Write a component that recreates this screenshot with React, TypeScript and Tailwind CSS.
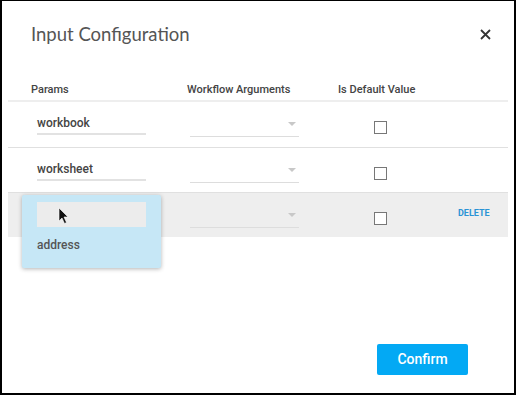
import React from 'react';

const rows = [
    { name: 'workbook', active: false, h: 'h-[46px]' },
    { name: 'worksheet', active: false, h: 'h-[45px]' },
    { name: '', active: true, h: 'h-[44px]' },
];

const Caret = () => (
    <svg width="8" height="5" viewBox="0 0 8 5" className="absolute right-[3px] top-[-14px]">
        <path d="M0 0 L8 0 L4 4 Z" fill="#c8c8c8" />
    </svg>
);

const Cursor = () => (
    <svg width="11" height="18" viewBox="0 0 11 18" className="absolute left-[21px] top-[5px]">
        <path d="M1 1 L1 14 L4 11 L6.5 16.5 L8.5 15.5 L6 10 L10 10 Z" fill="#111" stroke="#fff" strokeWidth="0.6" />
    </svg>
);

export default function App() {
    return (
        <div
            className="w-[516px] h-[395px] bg-white border-l-2 border-r-2 border-b-2 border-t border-black flex flex-col"
            style={{ fontFamily: 'Roboto, "Liberation Sans", sans-serif' }}
        >
            {/* Header */}
            <div className="flex items-center justify-between pl-[29px] pr-[23px] pt-[20px]">
                <h1
                    className="text-[18.5px] leading-[26px] text-[#555]"
                    style={{ fontFamily: 'Lato, "Open Sans", sans-serif' }}
                >
                    Input Configuration
                </h1>
                <svg width="11" height="11" viewBox="0 0 11 11" className="mt-[1px]">
                    <path d="M1 1 L10 10 M10 1 L1 10" stroke="#333" strokeWidth="1.8" />
                </svg>
            </div>

            {/* Table */}
            <div className="mx-[6px] mt-[35px] relative">
                <div className="grid grid-cols-[179px_151px_120px_1fr] h-[20px] border-b-2 border-[#eee] text-[11px] font-medium text-[#444] items-start">
                    <div className="pl-[23px]">Params</div>
                    <div>Workflow Arguments</div>
                    <div>Is Default Value</div>
                    <div />
                </div>

                {rows.map((row, idx) => (
                    <div
                        key={idx}
                        className={`grid grid-cols-[179px_151px_120px_1fr] ${row.h} items-start ${idx < 2 ? 'border-b border-[#e0e0e0]' : ''} ${row.active ? 'bg-[#eee]' : ''}`}
                    >
                        <div className="pl-[29px] pt-[9px]">
                            <div className="w-[109px] h-[24px] pt-[2px] border-b-2 border-[#e2e2e2] text-[12px] font-medium text-[#444] leading-[20px]">
                                {row.name}
                            </div>
                        </div>
                        <div className="pl-[3px] pt-[34px]">
                            <div className="relative w-[109px] h-[1px] bg-[#ddd]">
                                <Caret />
                            </div>
                        </div>
                        <div className="pl-[36px] pt-[19px]">
                            <div className="w-[13px] h-[13px] border border-[#777] bg-white" />
                        </div>
                        <div className="pt-[14px] text-[9px] leading-[12px] font-bold text-[#2a93d5]">
                            {row.active ? 'DELETE' : ''}
                        </div>
                    </div>
                ))}

                {/* Autocomplete menu */}
                <div className="absolute left-[14px] top-[113px] w-[139px] h-[73px] bg-[#c6e7f6] rounded-[2px] shadow-[0_1px_4px_rgba(0,0,0,0.3)]">
                    <div className="relative mx-[15px] mt-[7px] h-[25px] bg-[#ececec]">
                        <Cursor />
                    </div>
                    <div className="pl-[15px] mt-[8px] text-[12px] leading-[20px] font-medium text-[#555]">address</div>
                </div>
            </div>

            {/* Footer */}
            <div className="mt-auto flex justify-end pr-[46px] pb-[18px]">
                <button className="w-[91px] h-[31px] bg-[#03a9f4] text-white text-[14px] font-medium rounded-[2px]">
                    Confirm
                </button>
            </div>
        </div>
    );
}
